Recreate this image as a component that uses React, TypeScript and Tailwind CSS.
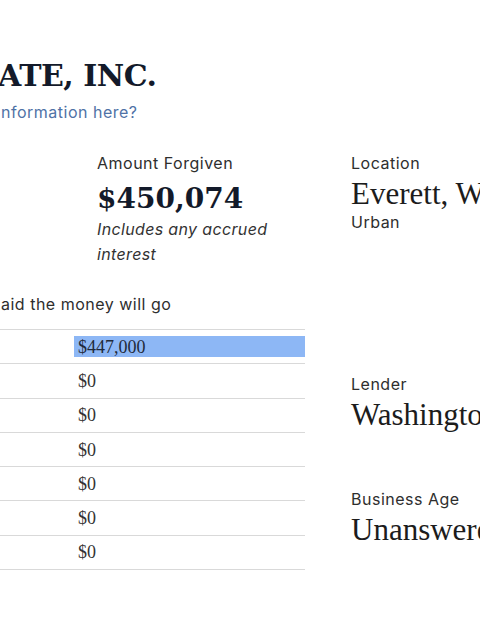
import React from "react";

const sans = "font-['Inter','Noto_Sans',sans-serif] tracking-[0.5px]";
const serifBold = "font-['DejaVu_Serif',serif] font-bold";
const serif = "font-['Liberation_Serif',serif]";

const rows = ["$447,000", "$0", "$0", "$0", "$0", "$0", "$0"];

export default function App() {
  return (
    <div className="w-[480px] h-[625px] overflow-hidden bg-white pt-[58px]">
      <h1 className={`${serifBold} -ml-[2px] whitespace-nowrap text-[30px] leading-[36px] tracking-[-0.5px] text-[#131a2a]`}>
        ATE, INC.
      </h1>
      <p className={`${sans} mt-[8px] whitespace-nowrap pl-[1px] text-[16px] leading-[20px] text-[#4f72a6]`}>
        nformation here?
      </p>

      <div className="mt-[31px] flex">
        {/* left main column */}
        <div className="w-[305px] shrink-0">
          <div className="flex">
            <div className="w-[97px] shrink-0" />
            <div className="flex flex-col">
              <div className={`${sans} text-[16px] leading-[20px] text-[#2e2e2e]`}>Amount Forgiven</div>
              <div className={`${serifBold} mt-[10px] text-[28px] leading-[32px] text-[#131a2a]`}>$450,074</div>
              <div className={`${sans} mt-[2px] w-[200px] text-[16px] italic leading-[25px] tracking-[0.35px] text-[#333]`}>
                Includes any accrued interest
              </div>
            </div>
          </div>

          <p className={`${sans} mt-[27px] whitespace-nowrap pl-[1px] text-[16px] leading-[20px] text-[#2e2e2e]`}>
            aid the money will go
          </p>

          <div className="mt-[15px] border-t border-[#d9d9d9]">
            {rows.map((v, i) => (
              <div key={i} className="flex h-[34.3px] items-center border-b border-[#d9d9d9]">
                <div className="w-[74px] shrink-0" />
                <div className="flex-1">
                  {i === 0 ? (
                    <div className={`${serif} flex h-[21.7px] items-center bg-[#8db7f5] pl-[4px] text-[18px] leading-[22px] text-[#1f2a3a]`}>
                      {v}
                    </div>
                  ) : (
                    <div className={`${serif} pl-[4px] text-[18px] leading-[22px] text-[#333]`}>{v}</div>
                  )}
                </div>
              </div>
            ))}
          </div>
        </div>

        {/* right column */}
        <div className="ml-[46px] flex flex-col whitespace-nowrap">
          <div className={`${sans} text-[16px] leading-[20px] text-[#2e2e2e]`}>Location</div>
          <div className={`${serif} mt-[3px] text-[31px] leading-[36px] text-[#1c1c1c]`}>Everett, WA</div>
          <div className={`${sans} text-[16px] leading-[20px] text-[#2e2e2e]`}>Urban</div>

          <div className={`${sans} mt-[142px] text-[16px] leading-[20px] text-[#2e2e2e]`}>Lender</div>
          <div className={`${serif} mt-[3px] text-[31px] leading-[36px] text-[#1c1c1c]`}>Washington</div>

          <div className={`${sans} mt-[56px] text-[16px] leading-[20px] text-[#2e2e2e]`}>Business Age</div>
          <div className={`${serif} mt-[3px] text-[31px] leading-[36px] text-[#1c1c1c]`}>Unanswered</div>
        </div>
      </div>
    </div>
  );
}
